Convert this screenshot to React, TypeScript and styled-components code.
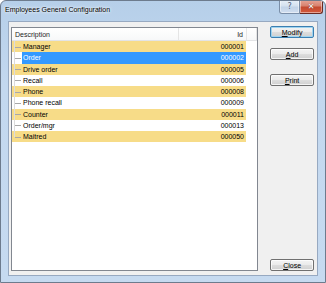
import React from 'react';
import styled, {createGlobalStyle} from 'styled-components';

type Tone = 'yellow' | 'white' | 'selected';

interface Employee {
    label: string;
    id: string;
    tone: Tone;
}

const employees: Employee[] = [
    {label: 'Manager', id: '000001', tone: 'yellow'},
    {label: 'Order', id: '000002', tone: 'selected'},
    {label: 'Drive order', id: '000005', tone: 'yellow'},
    {label: 'Recall', id: '000006', tone: 'white'},
    {label: 'Phone', id: '000008', tone: 'yellow'},
    {label: 'Phone recall', id: '000009', tone: 'white'},
    {label: 'Counter', id: '000011', tone: 'yellow'},
    {label: 'Order/mgr', id: '000013', tone: 'white'},
    {label: 'Maitred', id: '000050', tone: 'yellow'},
];

const GlobalStyle = createGlobalStyle`
    html, body {
        margin: 0;
        padding: 0;
        overflow: hidden;
        background: #ffffff;
    }
    body {
        font-family: "Liberation Sans", Arial, sans-serif;
        font-size: 7px;
    }
`;

const Window = styled.div`
    width: 326px;
    height: 283px;
    box-sizing: border-box;
    border: 1px solid #6d7b8d;
    border-radius: 6px 6px 0 0;
    background: linear-gradient(180deg, #b6cfe9 0%, #c3d8ef 30%, #c6daf0 100%);
    display: flex;
    flex-direction: column;
    overflow: hidden;
`;

const TitleBar = styled.div`
    height: 20px;
    display: flex;
    align-items: flex-start;
    padding-left: 4px;
`;

const TitleText = styled.span`
    margin-top: 5px;
    font-size: 7px;
    color: #000;
    text-shadow: 0 0 4px #ffffff, 0 0 2px #ffffff;
`;

const CaptionButtons = styled.div`
    margin-left: auto;
    margin-right: 2px;
    margin-top: -1px;
    display: flex;
`;

const CaptionButton = styled.div<{$danger?: boolean}>`
    width: ${p => p.$danger ? 23 : 21}px;
    height: 14px;
    box-sizing: border-box;
    border: 1px solid ${p => p.$danger ? '#6b2a22' : '#7a8ea8'};
    border-top: none;
    border-radius: ${p => p.$danger ? '0 0 3px 0' : '0 0 0 3px'};
    border-left-width: ${p => p.$danger ? 0 : 1}px;
    background: ${p => p.$danger
        ? 'linear-gradient(180deg, #e8a698 0%, #d7826f 45%, #c44a30 55%, #d4593c 100%)'
        : 'linear-gradient(180deg, #e8f0f9 0%, #d5e1ef 45%, #c2d3e8 55%, #d0def0 100%)'};
    box-shadow: inset 0 0 0 1px rgba(255, 255, 255, 0.45);
    display: flex;
    align-items: center;
    justify-content: center;
    font-family: "DejaVu Sans", sans-serif;
    font-size: 8px;
    font-weight: ${p => p.$danger ? 'bold' : 'normal'};
    color: ${p => p.$danger ? '#ffffff' : '#51617a'};
    text-shadow: ${p => p.$danger ? '0 0 1px #5a1a10' : 'none'};
`;

const Client = styled.div`
    flex: 1;
    margin: 0 7px 6px 7px;
    border: 1px solid #97a9c1;
    background: #f0f0f0;
    display: flex;
    padding: 5px 3px 4px 2px;
    box-sizing: border-box;
`;

const ListBox = styled.div`
    width: 248px;
    box-sizing: border-box;
    border: 1px solid #828790;
    background: #ffffff;
    display: flex;
    flex-direction: column;
`;

const Header = styled.div`
    height: 12px;
    display: flex;
    background: linear-gradient(180deg, #ffffff 0%, #f7f8f9 100%);
    border-bottom: 1px solid #e3e4e6;
`;

const HeaderCell = styled.div<{$width?: number; $right?: boolean}>`
    width: ${p => p.$width ? `${p.$width}px` : 'auto'};
    flex: ${p => p.$width ? 'none' : 1};
    box-sizing: border-box;
    border-right: 1px solid #e5e5e5;
    padding: 0 3px;
    display: flex;
    align-items: center;
    justify-content: ${p => p.$right ? 'flex-end' : 'flex-start'};
    color: #1e1e1e;
`;

const Rows = styled.div`
    display: flex;
    flex-direction: column;
`;

const Row = styled.div<{$tone: Tone}>`
    width: 234px;
    height: 11.25px;
    display: flex;
    background: ${p => p.$tone === 'yellow' ? '#f7dc88' : '#ffffff'};
`;

const Tree = styled.div<{$last?: boolean}>`
    width: 10px;
    position: relative;
    &::before {
        content: '';
        position: absolute;
        left: 2px;
        top: 0;
        height: ${p => p.$last ? '50%' : '100%'};
        border-left: 1px solid #dcdcdc;
    }
    &::after {
        content: '';
        position: absolute;
        left: 3px;
        top: 50%;
        width: 6px;
        border-top: 1px solid #a8a8a8;
    }
`;

const RowBody = styled.div<{$tone: Tone}>`
    flex: 1;
    display: flex;
    align-items: center;
    padding: 0 1px 0 1px;
    background: ${p => p.$tone === 'selected' ? '#3399ff' : 'transparent'};
    color: ${p => p.$tone === 'selected' ? '#ffffff' : '#000000'};
`;

const Label = styled.span`
    flex: 1;
`;

const IdText = styled.span`
    padding-right: 1px;
`;

const ButtonColumn = styled.div`
    width: 44px;
    margin-left: 12px;
    display: flex;
    flex-direction: column;
`;

const Button = styled.div<{$default?: boolean; $gap?: number; $bottom?: boolean}>`
    height: 12px;
    box-sizing: border-box;
    margin-top: ${p => p.$bottom ? 'auto' : `${p.$gap ?? 0}px`};
    border: 1px solid ${p => p.$default ? '#3c7fb1' : '#707070'};
    border-radius: 2px;
    background: linear-gradient(180deg, #f4f4f4 0%, #ebebeb 48%, #dddddd 52%, #d0d0d0 100%);
    box-shadow: ${p => p.$default
        ? 'inset 0 0 0 1px #9fd4f0'
        : 'inset 0 0 0 1px rgba(255, 255, 255, 0.75)'};
    display: flex;
    align-items: center;
    justify-content: center;
    color: #000;
    font-size: 7px;
    & u {
        text-decoration: underline;
    }
`;

export default function App() {
    return (
        <>
            <GlobalStyle/>
            <Window>
                <TitleBar>
                    <TitleText>Employees General Configuration</TitleText>
                    <CaptionButtons>
                        <CaptionButton>?</CaptionButton>
                        <CaptionButton $danger>✕</CaptionButton>
                    </CaptionButtons>
                </TitleBar>
                <Client>
                    <ListBox>
                        <Header>
                            <HeaderCell $width={167}>Description</HeaderCell>
                            <HeaderCell $width={68} $right>Id</HeaderCell>
                            <HeaderCell/>
                        </Header>
                        <Rows>
                            {employees.map((e, i) => (
                                <Row key={e.id} $tone={e.tone}>
                                    <Tree $last={i === employees.length - 1}/>
                                    <RowBody $tone={e.tone}>
                                        <Label>{e.label}</Label>
                                        <IdText>{e.id}</IdText>
                                    </RowBody>
                                </Row>
                            ))}
                        </Rows>
                    </ListBox>
                    <ButtonColumn>
                        <Button $default $gap={-1}><span><u>M</u>odify</span></Button>
                        <Button $gap={10}><span><u>A</u>dd</span></Button>
                        <Button $gap={14}><span><u>P</u>rint</span></Button>
                        <Button $bottom><span><u>C</u>lose</span></Button>
                    </ButtonColumn>
                </Client>
            </Window>
        </>
    );
}
